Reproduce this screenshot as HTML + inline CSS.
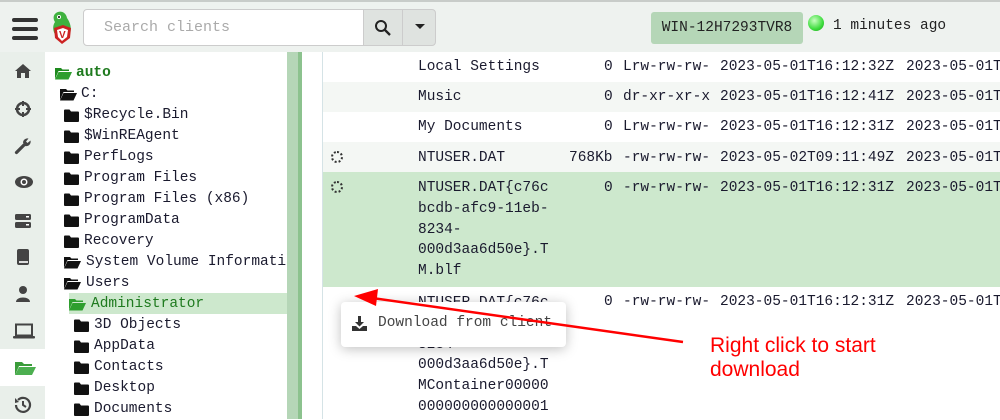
<!DOCTYPE html>
<html><head><meta charset="utf-8"><style>
*{margin:0;padding:0;box-sizing:border-box}
body{width:1000px;height:419px;overflow:hidden;background:#fff;font-family:"Liberation Mono","DejaVu Sans Mono",monospace;position:relative;color:#222}
.hdr{position:absolute;left:0;top:0;width:1000px;height:52px;background:#eef2ef;border-top:2px solid #c8ccc9}
.nav{position:absolute;left:0;top:52px;width:45px;height:367px;background:#e9efea}
.act{position:absolute;left:0;top:349px;width:45px;height:37px;background:#fff}
.ic{position:absolute;left:14px}
.tree{position:absolute;left:45px;top:52px;width:242px;height:367px;background:#fff;font-size:14.5px}
.t{position:absolute;height:21px;line-height:21px;white-space:nowrap;color:#1a1a2e}
.vl{position:absolute;left:322px;top:52px;width:1px;height:367px;background:#d5e3e6}
.row{position:absolute;left:323px;width:677px;font-size:14.5px;white-space:nowrap}
.c{position:absolute;line-height:30px;white-space:nowrap}
</style></head><body>
<div class="hdr"></div>
<div style="position:absolute;left:12px;top:18px;width:26px;height:4px;background:#333;border-radius:2px"></div>
<div style="position:absolute;left:12px;top:27px;width:26px;height:4px;background:#333;border-radius:2px"></div>
<div style="position:absolute;left:12px;top:36px;width:26px;height:4px;background:#333;border-radius:2px"></div>
<svg style="position:absolute;left:50px;top:10px" width="25" height="36" viewBox="0 0 25 36">
<path d="M6 3 C10 0 16 2 17 8 C20 12 22 18 20 24 L14 28 L6 26 C3 22 2 16 5 12 C3 9 3 5 6 3Z" fill="#3fb23f"/>
<circle cx="9" cy="7" r="2" fill="#fff"/><circle cx="9" cy="7" r="1" fill="#000"/>
<path d="M4 18 L13 15 L21 18 L20 28 L12 34 L5 28Z" fill="#c22"/>
<path d="M7 20 L13 18 L18 20 L17 27 L12 31 L8 27Z" fill="#fff"/>
<text x="9" y="28" font-size="10" font-family="Liberation Sans" font-weight="bold" fill="#c22">V</text>
</svg>
<div style="position:absolute;left:83px;top:9px;width:281px;height:37px;background:#fff;border:1px solid #ccc;border-radius:4px 0 0 4px;font-size:15px;color:#aaa;padding:9px 0 0 20px">Search clients</div>
<div style="position:absolute;left:363px;top:9px;width:40px;height:37px;background:#dfe3e0;border:1px solid #ccc"></div>
<svg style="position:absolute;left:374px;top:19px" width="18" height="18" viewBox="0 0 18 18"><circle cx="7" cy="7" r="5" fill="none" stroke="#222" stroke-width="2"/><path d="M11 11 L16 16" stroke="#222" stroke-width="2.3"/></svg>
<div style="position:absolute;left:402px;top:9px;width:34px;height:37px;background:#dfe3e0;border:1px solid #ccc;border-radius:0 4px 4px 0"></div>
<div style="position:absolute;left:415px;top:24px;border-left:5px solid transparent;border-right:5px solid transparent;border-top:5px solid #222"></div>
<div style="position:absolute;left:651px;top:12px;width:152px;height:32px;background:#b5d6b7;border-radius:3px;font-size:14.5px;line-height:32px;text-align:center;color:#222">WIN-12H7293TVR8</div>
<div style="position:absolute;left:808px;top:15px;width:16px;height:16px;border-radius:50%;background:radial-gradient(circle at 40% 35%,#c8ffc0,#3ddc3d 60%,#1a9a1a)"></div>
<div style="position:absolute;left:833px;top:18px;font-size:14.5px;color:#222">1 minutes ago</div>

<div class="nav"></div><div class="act"></div>
<svg class="ic" style="top:63px" width="18" height="16" viewBox="0 0 18 16"><path d="M9 1 L1 8 H3 V15 H7 V10 H11 V15 H15 V8 H17Z" fill="#444"/></svg>
<svg class="ic" style="top:100px" width="18" height="18" viewBox="0 0 18 18"><circle cx="9" cy="9" r="6" fill="none" stroke="#444" stroke-width="2.5"/><path d="M9 1V6M9 12V17M1 9H6M12 9H17" stroke="#444" stroke-width="2"/></svg>
<svg class="ic" style="top:137px" width="18" height="18" viewBox="0 0 18 18"><path d="M2.5 15.5 L10 8" stroke="#444" stroke-width="3.2" stroke-linecap="round"/><path d="M9 5.5 A4.5 4.5 0 0 1 14.5 1.5 L12 4.5 L13.5 6 L16.5 3.5 A4.5 4.5 0 0 1 11 9Z" fill="#444"/></svg>
<svg class="ic" style="top:175px" width="20" height="14" viewBox="0 0 20 14"><ellipse cx="10" cy="7" rx="9" ry="6" fill="#444"/><circle cx="10" cy="7" r="3.5" fill="#fff"/><circle cx="10" cy="7" r="2" fill="#444"/></svg>
<svg class="ic" style="top:213px" width="18" height="16" viewBox="0 0 18 16"><rect x="1" y="1" width="16" height="6" rx="1.5" fill="#444"/><rect x="1" y="9" width="16" height="6" rx="1.5" fill="#444"/><rect x="12" y="3" width="3" height="1.5" fill="#fff"/><rect x="12" y="11" width="3" height="1.5" fill="#fff"/></svg>
<svg class="ic" style="top:248px;left:16px" width="14" height="18" viewBox="0 0 14 18"><rect x="1" y="1" width="12" height="16" rx="2" fill="#444"/><rect x="3" y="13" width="9" height="2" fill="#ddd"/></svg>
<svg class="ic" style="top:285px;left:15px" width="16" height="18" viewBox="0 0 16 18"><circle cx="8" cy="5" r="4" fill="#444"/><path d="M1 17 C1 11 15 11 15 17Z" fill="#444"/></svg>
<svg class="ic" style="top:323px;left:13px" width="22" height="16" viewBox="0 0 22 16"><rect x="3" y="1.5" width="16" height="11" fill="none" stroke="#444" stroke-width="2"/><rect x="0" y="13" width="22" height="2.5" rx="1" fill="#444"/></svg>
<svg class="ic" style="top:360px" width="22" height="16" viewBox="0 0 22 16"><path d="M1 2 H8 L10 4 H18 V6 H5 L1 15Z" fill="#3a9c3a"/><path d="M5 7 H22 L18 15 H1Z" fill="#4caf50"/></svg>
<svg class="ic" style="top:396px" width="18" height="18" viewBox="0 0 18 18"><path d="M4 4 A7 7 0 1 1 2 9" fill="none" stroke="#444" stroke-width="2.2"/><path d="M1 2 L5 6 L1 7Z" fill="#444"/><path d="M9 5 V9 L12 11" stroke="#444" stroke-width="2" fill="none"/></svg>

<div class="tree">
<div style="position:absolute;left:24px;top:241px;width:218px;height:21px;background:#cde8cd"></div>
</div>

<div class="vl"></div>

<div class="row" style="top:52px;height:30px;background:#fff"></div>
<div class="row" style="top:82px;height:30px;background:#f4f7f4"></div>
<div class="row" style="top:112px;height:30px;background:#fff"></div>
<div class="row" style="top:142px;height:30px;background:#f4f7f4"></div>
<div class="row" style="top:172px;height:115px;background:#cde8cd"></div>
<div class="row" style="top:287px;height:132px;background:#fff"></div>

<div style="position:absolute;left:0;top:0;font-size:14.5px;color:#1a1a2e">
<div class="c" style="left:418px;top:52px">Local Settings</div><div class="c" style="left:604px;top:52px">0</div><div class="c" style="left:623px;top:52px">Lrw-rw-rw-</div><div class="c" style="left:720px;top:52px">2023-05-01T16:12:32Z</div><div class="c" style="left:906px;top:52px">2023-05-01T</div>
<div class="c" style="left:418px;top:82px">Music</div><div class="c" style="left:604px;top:82px">0</div><div class="c" style="left:623px;top:82px">dr-xr-xr-x</div><div class="c" style="left:720px;top:82px">2023-05-01T16:12:41Z</div><div class="c" style="left:906px;top:82px">2023-05-01T</div>
<div class="c" style="left:418px;top:112px">My Documents</div><div class="c" style="left:604px;top:112px">0</div><div class="c" style="left:623px;top:112px">Lrw-rw-rw-</div><div class="c" style="left:720px;top:112px">2023-05-01T16:12:31Z</div><div class="c" style="left:906px;top:112px">2023-05-01T</div>
<div class="c" style="left:418px;top:143px">NTUSER.DAT</div><div class="c" style="left:569px;top:143px">768Kb</div><div class="c" style="left:623px;top:143px">-rw-rw-rw-</div><div class="c" style="left:720px;top:143px">2023-05-02T09:11:49Z</div><div class="c" style="left:906px;top:143px">2023-05-01T</div>
<div class="c" style="left:418px;top:174px;line-height:20.8px;padding-top:4px">NTUSER.DAT{c76c<br>bcdb-afc9-11eb-<br>8234-<br>000d3aa6d50e}.T<br>M.blf</div><div class="c" style="left:604px;top:173px">0</div><div class="c" style="left:623px;top:173px">-rw-rw-rw-</div><div class="c" style="left:720px;top:173px">2023-05-01T16:12:31Z</div><div class="c" style="left:906px;top:173px">2023-05-01T</div>
<div class="c" style="left:418px;top:289px;line-height:20.8px;padding-top:4px">NTUSER.DAT{c76c<br>bcdb-afc9-11eb-<br>8234-<br>000d3aa6d50e}.T<br>MContainer00000<br>000000000000001</div><div class="c" style="left:604px;top:287px">0</div><div class="c" style="left:623px;top:287px">-rw-rw-rw-</div><div class="c" style="left:720px;top:287px">2023-05-01T16:12:31Z</div><div class="c" style="left:906px;top:287px">2023-05-01T</div>
</div>
<div style="position:absolute;left:331px;top:151px;width:12px;height:12px;border:2px dotted #333;border-radius:50%"></div>
<div style="position:absolute;left:331px;top:181px;width:12px;height:12px;border:2px dotted #333;border-radius:50%"></div>

<div style="position:absolute;left:0;top:0;font-size:14.5px">
<svg style="position:absolute;left:55px;top:67px" width="17" height="13" viewBox="0 0 17 13"><path d="M0 1 H6 L7.5 2.5 H14 V4 H3.5 L0 12Z" fill="#1e8a1e"/><path d="M3.5 5 H17 L13.5 12.5 H0Z" fill="#2e9e2e"/></svg>
<div class="t" style="left:76px;top:63px;color:#1e7a1e;font-weight:bold">auto</div>
<svg style="position:absolute;left:60px;top:88px" width="17" height="13" viewBox="0 0 17 13"><path d="M0 1 H6 L7.5 2.5 H14 V4 H3.5 L0 12Z" fill="#111"/><path d="M3.5 5 H17 L13.5 12.5 H0Z" fill="#111"/></svg>
<div class="t" style="left:81px;top:84px">C:</div>
</div>
<div id="f" style="position:absolute;left:0;top:0;font-size:14.5px"></div>
<script>
var f=document.getElementById('f');
var fold='<svg width="15" height="13" viewBox="0 0 15 13" style="position:absolute;left:-20px;top:4px"><path d="M0 1.5 Q0 0.5 1 0.5 H5.5 L7 2.5 H14 Q15 2.5 15 3.5 V12 Q15 13 14 13 H1 Q0 13 0 12Z" fill="#111"/></svg>';
var open='<svg width="17" height="13" viewBox="0 0 17 13" style="position:absolute;left:-22px;top:4px"><path d="M0 1 H6 L7.5 2.5 H14 V4 H3.5 L0 12Z" fill="COL"/><path d="M3.5 5 H17 L13.5 12.5 H0Z" fill="COL"/></svg>';
var items=[[84,'$Recycle.Bin',0],[84,'$WinREAgent',0],[84,'PerfLogs',0],[84,'Program Files',0],[84,'Program Files (x86)',0],[84,'ProgramData',0],[84,'Recovery',0],[86,'System Volume Informati',1],[86,'Users',1],[91,'Administrator',2],[94,'3D Objects',0],[94,'AppData',0],[94,'Contacts',0],[94,'Desktop',0],[94,'Documents',0]];
var h='';items.forEach(function(it,i){var y=105+i*21;var ic=it[2]==0?fold:open.replace(/COL/g,it[2]==2?'#2e9e2e':'#111');
h+='<div class="t" style="left:'+it[0]+'px;top:'+y+'px;'+(it[2]==2?'color:#1e7a1e':'')+'">'+ic+it[1]+'</div>';});
f.innerHTML=h;
</script>
<div style="position:absolute;left:287px;top:52px;width:13px;height:367px;background:#b5d6b7"></div>
<div style="position:absolute;left:298px;top:52px;width:4px;height:367px;background:#8cc28e"></div>

<div style="position:absolute;left:341px;top:302px;width:225px;height:45px;background:#fff;border-radius:4px;box-shadow:0 2px 12px rgba(0,0,0,0.25)"></div>
<svg style="position:absolute;left:352px;top:316px" width="15" height="15" viewBox="0 0 15 15"><path d="M6 0 H9 V6 H12 L7.5 10.5 L3 6 H6Z" fill="#333"/><path d="M0 10 H4 L7.5 13 L11 10 H15 V15 H0Z" fill="#333"/></svg>
<div style="position:absolute;left:378px;top:315px;font-size:14.5px;color:#444">Download from client</div>

<svg style="position:absolute;left:0;top:0" width="1000" height="419"><line x1="683" y1="342" x2="372" y2="298" stroke="#f00" stroke-width="2.5"/><path d="M354 296 L378 289 L376 306Z" fill="#f00"/></svg>
<div style="position:absolute;left:710px;top:334px;font-family:'Liberation Sans',sans-serif;font-size:21px;line-height:24px;color:#f00">Right click to start<br>download</div>
</body></html>
